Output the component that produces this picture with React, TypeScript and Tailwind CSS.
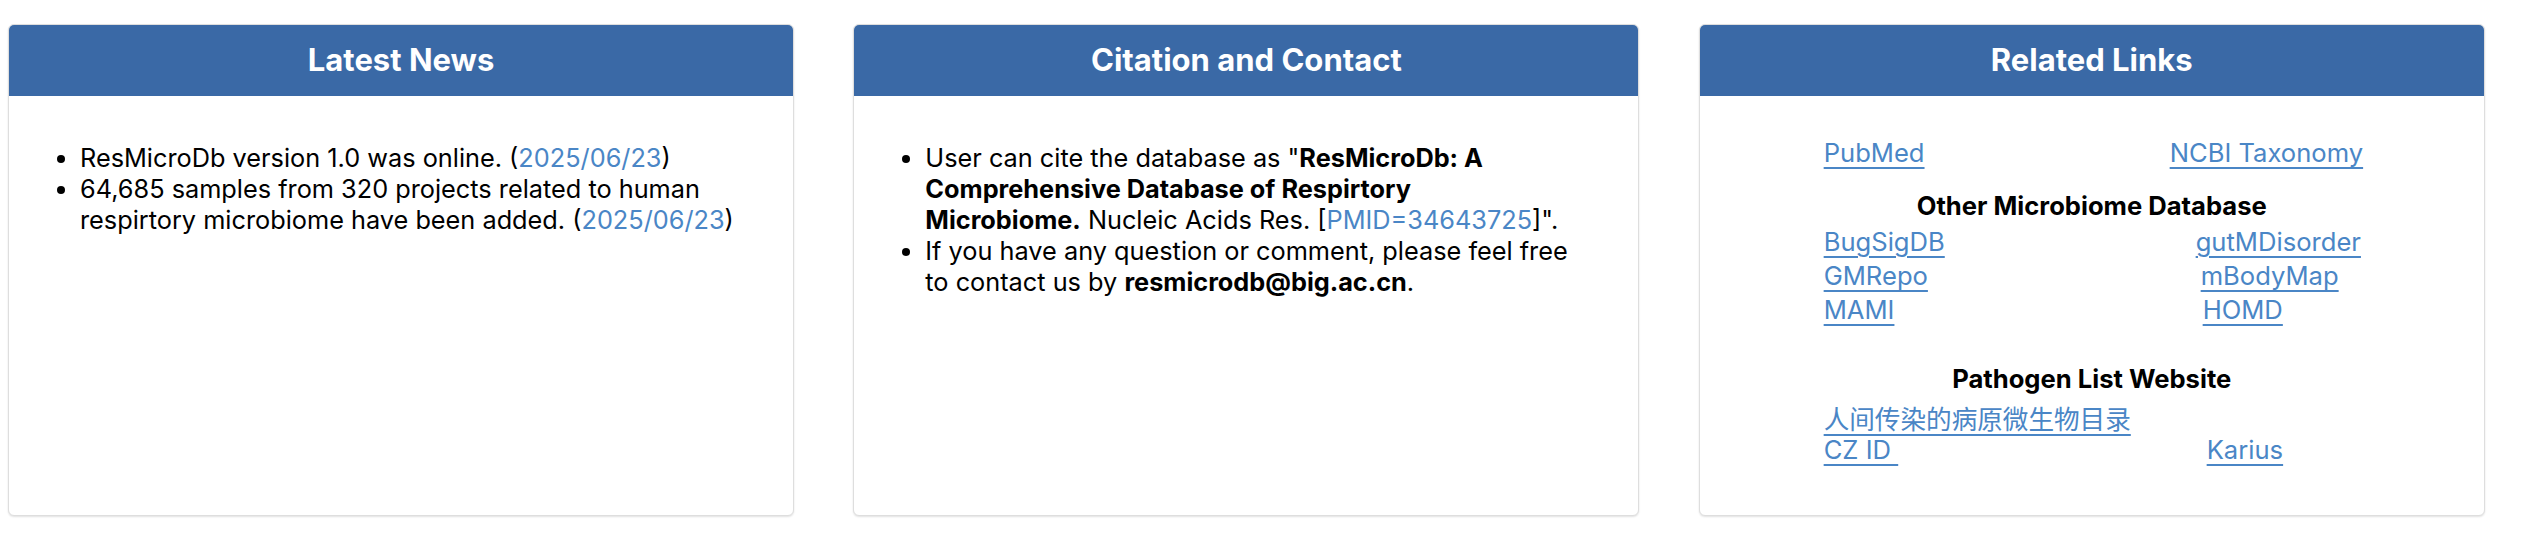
import React from "react";

const font = { fontFamily: "Inter, 'Noto Sans CJK SC', sans-serif" };

function Card({ title, children }: { title: string; children: React.ReactNode }) {
  return (
    <div>
      <div className="ml-2 w-[93%] h-[492px] rounded-[6px] border border-[#dedede] shadow-[0_1px_2px_rgba(0,0,0,0.12)] bg-white overflow-hidden">
        <div className="h-[71px] bg-[#3a69a6] flex items-center justify-center text-white font-bold text-[31px]">
          {title}
        </div>
        {children}
      </div>
    </div>
  );
}

function Link({ children, plain = false }: { children: React.ReactNode; plain?: boolean }) {
  const cls = plain ? "text-[#4a86c6]" : "text-[#4a86c6] underline underline-offset-[5px]";
  return (
    <a href="#" className={cls}>
      {children}
    </a>
  );
}

const microbiomeLinks = [
  { left: "BugSigDB", right: "gutMDisorder", ml: "ml-[26px]" },
  { left: "GMRepo", right: "mBodyMap", ml: "ml-[31px]" },
  { left: "MAMI", right: "HOMD", ml: "ml-[33px]" },
];

export default function App() {
  return (
    <div className="w-[2536px] h-[558px] bg-white pt-6 grid grid-cols-3 items-start" style={font}>
      <Card title="Latest News">
        <ul className="list-disc pl-[71px] pr-[50px] pt-[46px] text-[25.3px] leading-[31px] text-black">
          <li>
            ResMicroDb version 1.0 was online. (<Link plain>2025/06/23</Link>)
          </li>
          <li>
            64,685 samples from 320 projects related to human respirtory microbiome have been added. (
            <Link plain>2025/06/23</Link>)
          </li>
        </ul>
      </Card>

      <Card title="Citation and Contact">
        <ul className="list-disc pl-[71px] pr-[50px] pt-[46px] text-[25.3px] leading-[31px] text-black">
          <li>
            User can cite the database as "<b>ResMicroDb: A Comprehensive Database of Respirtory</b>
            <br />
            <b>Microbiome.</b> Nucleic Acids Res. [<Link plain>PMID=34643725</Link>]".
          </li>
          <li>
            If you have any question or comment, please feel free
            <br />
            to contact us by <b>resmicrodb@big.ac.cn</b>.
          </li>
        </ul>
      </Card>

      <Card title="Related Links">
        <div className="pt-[40px] text-[25.6px] leading-[34px]">
          <div className="flex pl-[124px]">
            <div className="w-[346px]">
              <Link>PubMed</Link>
            </div>
            <Link>NCBI Taxonomy</Link>
          </div>
          <div className="text-center font-bold mt-[19px] text-black">Other Microbiome Database</div>
          <div className="mt-[2px]">
            {microbiomeLinks.map((r) => (
              <div key={r.left} className="flex pl-[124px]">
                <div className="w-[346px]">
                  <Link>{r.left}</Link>
                </div>
                <div className={r.ml}>
                  <Link>{r.right}</Link>
                </div>
              </div>
            ))}
          </div>
          <div className="text-center font-bold mt-[35px] text-black">Pathogen List Website</div>
          <div className="pl-[124px] mt-[7px]">
            <Link>人间传染的病原微生物目录</Link>
          </div>
          <div className="flex pl-[124px] -mt-[4px]">
            <div className="w-[346px]">
              <Link>CZ ID{"\u00a0"}</Link>
            </div>
            <div className="ml-[37px]">
              <Link>Karius</Link>
            </div>
          </div>
        </div>
      </Card>
    </div>
  );
}
